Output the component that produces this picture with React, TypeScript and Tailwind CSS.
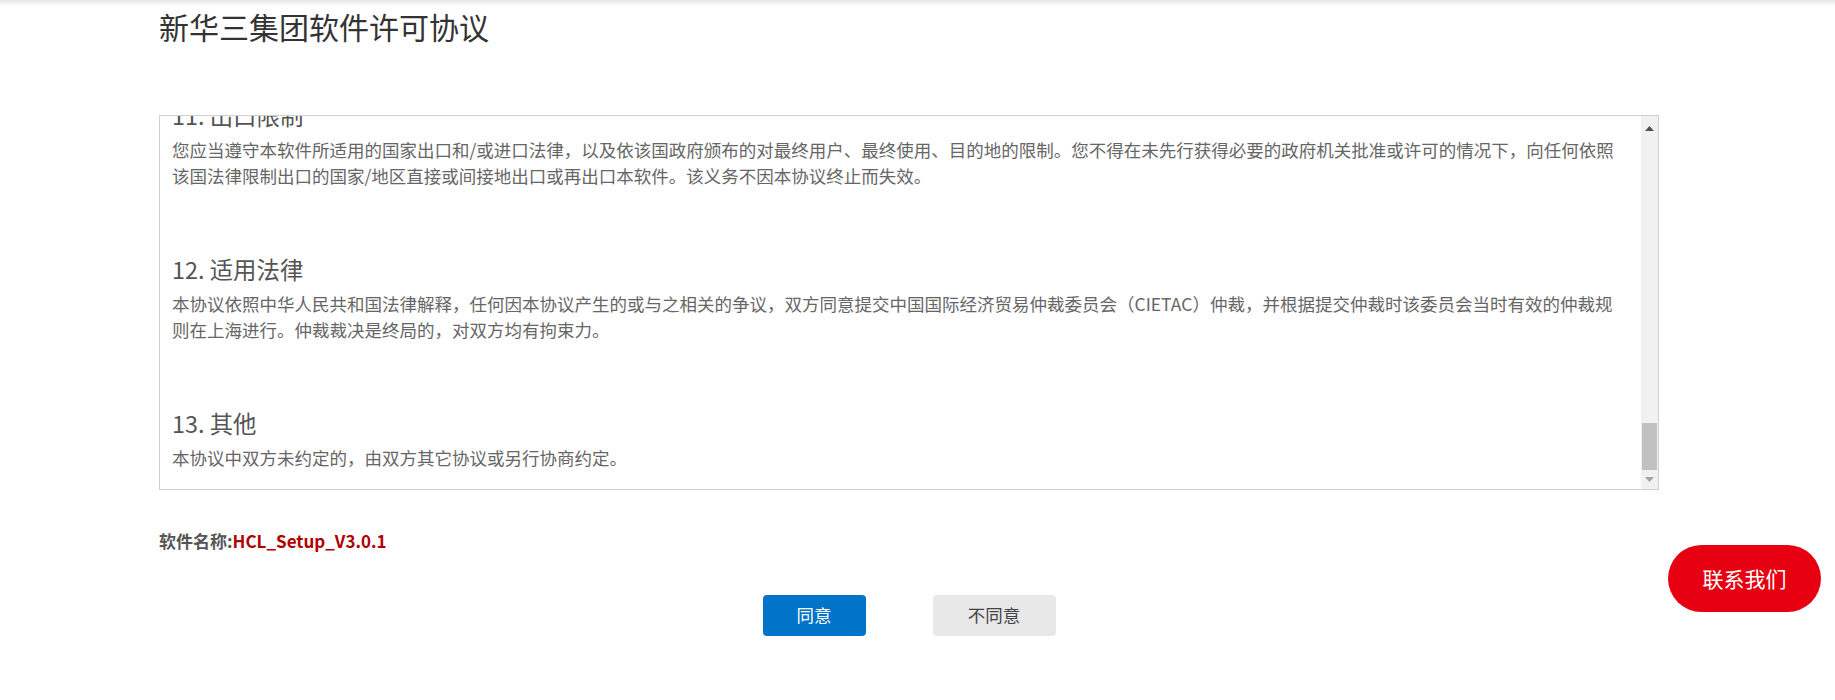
const FONT = "font-['Microsoft_YaHei','Noto_Sans_CJK_SC',sans-serif]";

const sections = [
  {
    title: "11. 出口限制",
    lines: [
      "您应当遵守本软件所适用的国家出口和/或进口法律，以及依该国政府颁布的对最终用户、最终使用、目的地的限制。您不得在未先行获得必要的政府机关批准或许可的情况下，向任何依照",
      "该国法律限制出口的国家/地区直接或间接地出口或再出口本软件。该义务不因本协议终止而失效。",
    ],
  },
  {
    title: "12. 适用法律",
    lines: [
      "本协议依照中华人民共和国法律解释，任何因本协议产生的或与之相关的争议，双方同意提交中国国际经济贸易仲裁委员会（CIETAC）仲裁，并根据提交仲裁时该委员会当时有效的仲裁规",
      "则在上海进行。仲裁裁决是终局的，对双方均有拘束力。",
    ],
  },
  {
    title: "13. 其他",
    lines: ["本协议中双方未约定的，由双方其它协议或另行协商约定。"],
  },
];

function FakeScrollbar() {
  return (
    <div className="w-[17px] shrink-0 bg-[#f1f1f1] flex flex-col items-center">
      <div className="h-[24px] flex items-center justify-center">
        <svg width="9" height="5" viewBox="0 0 9 5">
          <path d="M0 5 L4.5 0 L9 5 Z" fill="#505050" />
        </svg>
      </div>
      <div className="flex-1" />
      <div className="w-[15px] h-[47px] bg-[#c1c1c1]" />
      <div className="h-[19px] flex items-center justify-center">
        <svg width="9" height="5" viewBox="0 0 9 5">
          <path d="M0 0 L9 0 L4.5 5 Z" fill="#a3a3a3" />
        </svg>
      </div>
    </div>
  );
}

export default function App() {
  return (
    <div className={`relative w-[1835px] h-[700px] bg-white overflow-hidden ${FONT}`}>
      <div className="h-[6px] bg-gradient-to-b from-[#e6e6e6] to-white" />

      <div className="ml-[159px] w-[1500px]">
        <h1 className="text-[30px] leading-[40px] text-[#333] font-normal">新华三集团软件许可协议</h1>

        {/* agreement text box, shown scrolled to the bottom */}
        <div className="mt-[69px] h-[375px] border border-[#d0d0d4] flex">
          <div className="flex-1 overflow-hidden pl-[12px]">
            <div className="-mt-[16px]">
              {sections.map((s, i) => (
                <div key={s.title} className={i > 0 ? "mt-[65px]" : ""}>
                  <h3 className="text-[23.4px] leading-[30px] text-[#555] font-normal mb-[7px]">{s.title}</h3>
                  {s.lines.map((l) => (
                    <p key={l} className="text-[17.5px] leading-[26px] text-[#666] whitespace-nowrap">
                      {l}
                    </p>
                  ))}
                </div>
              ))}
            </div>
          </div>
          <FakeScrollbar />
        </div>

        <div className="mt-[39px] text-[17px] leading-[24px] font-bold">
          <span className="text-[#555]">软件名称:</span>
          <span className="text-[#b00000]">HCL_Setup_V3.0.1</span>
        </div>

        <div className="mt-[42px] flex justify-center gap-[67px]">
          <button className="w-[103px] h-[41px] rounded-[4px] bg-[#0074c8] text-white text-[17.5px]">同意</button>
          <button className="w-[123px] h-[41px] rounded-[4px] bg-[#e8e8e8] text-[#444] text-[17.5px]">不同意</button>
        </div>
      </div>

      <button className="fixed right-[14px] top-[545px] w-[153px] h-[67px] rounded-full bg-[#e60012] text-white text-[21px] font-normal">
        联系我们
      </button>
    </div>
  );
}
